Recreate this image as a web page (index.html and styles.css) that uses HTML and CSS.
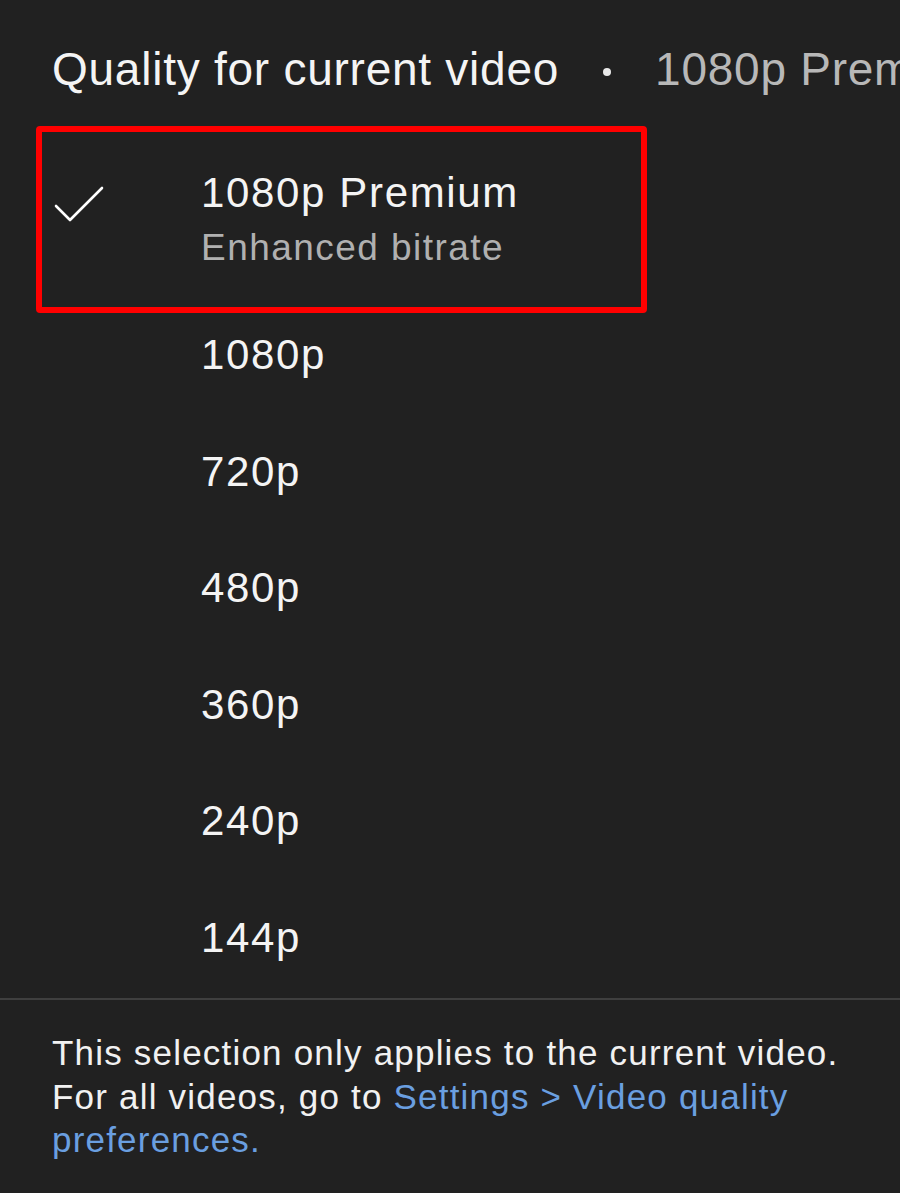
FILE: index.html
```html
<!DOCTYPE html>
<html>
<head>
<meta charset="utf-8">
<link rel="stylesheet" href="styles.css">
</head>
<body>
<div class="sheet">
  <header class="head">
    <span class="title">Quality for current video</span>
    <span class="dot"></span>
    <span class="current">1080p Premium</span>
  </header>
  <ul class="list">
    <li class="item item-selected">
      <span class="check">
        <svg width="50" height="38" viewBox="0 0 50 38"><path d="M2 21 L16 35 L48 3" fill="none" stroke="#fff" stroke-width="2.6" stroke-linecap="round" stroke-linejoin="round"/></svg>
      </span>
      <div class="labels">
        <div class="label">1080p Premium</div>
        <div class="sub">Enhanced bitrate</div>
      </div>
      <div class="highlight"></div>
    </li>
    <li class="item"><span class="check"></span><div class="label">1080p</div></li>
    <li class="item"><span class="check"></span><div class="label">720p</div></li>
    <li class="item"><span class="check"></span><div class="label">480p</div></li>
    <li class="item"><span class="check"></span><div class="label">360p</div></li>
    <li class="item"><span class="check"></span><div class="label">240p</div></li>
    <li class="item"><span class="check"></span><div class="label">144p</div></li>
  </ul>
  <footer class="foot">
    <p class="note">This selection only applies to the current video. For all videos, go to <span class="link">Settings &gt; Video quality preferences.</span></p>
  </footer>
</div>
</body>
</html>
```
FILE: styles.css
```css
html, body {
  margin: 0;
  padding: 0;
  background: #212121;
}
body {
  font-family: "Liberation Sans", Arial, sans-serif;
  color: #f1f1f1;
  width: 900px;
  height: 1193px;
  overflow: hidden;
}
.sheet {
  display: flex;
  flex-direction: column;
}
.head {
  height: 143px;
  display: flex;
  align-items: center;
  padding: 0 0 6px 52px;
  box-sizing: border-box;
  white-space: nowrap;
  overflow: hidden;
  font-size: 46px;
  letter-spacing: 0.75px;
}
.title {
  color: #f4f4f4;
}
.dot {
  width: 8px;
  height: 8px;
  border-radius: 50%;
  background: #e8e8e8;
  margin: 6px 44px 0 44px;
  flex: none;
}
.current {
  color: #b8b8b8;
}
.list {
  list-style: none;
  margin: 0;
  padding: 0;
}
.item {
  position: relative;
  height: 116.5px;
  display: flex;
  align-items: center;
  font-size: 42px;
  letter-spacing: 1.65px;
}
.item-selected {
  height: 154px;
  padding-bottom: 2px;
  box-sizing: border-box;
}
.check {
  width: 201px;
  padding-left: 54px;
  box-sizing: border-box;
  flex: none;
  display: flex;
  align-items: center;
}
.check svg {
  display: block;
  margin-bottom: 30px;
}
.labels {
  display: flex;
  flex-direction: column;
}
.label {
  color: #f4f4f4;
  line-height: 1.2;
}
.sub {
  color: #b0b0b0;
  font-size: 37px;
  letter-spacing: 1.45px;
  line-height: 1.2;
  margin-top: 8px;
}
.highlight {
  position: absolute;
  left: 36px;
  top: -17px;
  width: 611px;
  height: 187px;
  box-sizing: border-box;
  border: 6px solid #ff0000;
  border-radius: 4px;
  pointer-events: none;
}
.foot {
  border-top: 2px solid #3f3f3f;
  margin-top: 2px;
  padding: 31px 48px 0 52px;
}
.note {
  margin: 0;
  font-size: 35px;
  letter-spacing: 1.2px;
  line-height: 43.5px;
  color: #f1f1f1;
}
.link {
  color: #6a9fe0;
}
```
